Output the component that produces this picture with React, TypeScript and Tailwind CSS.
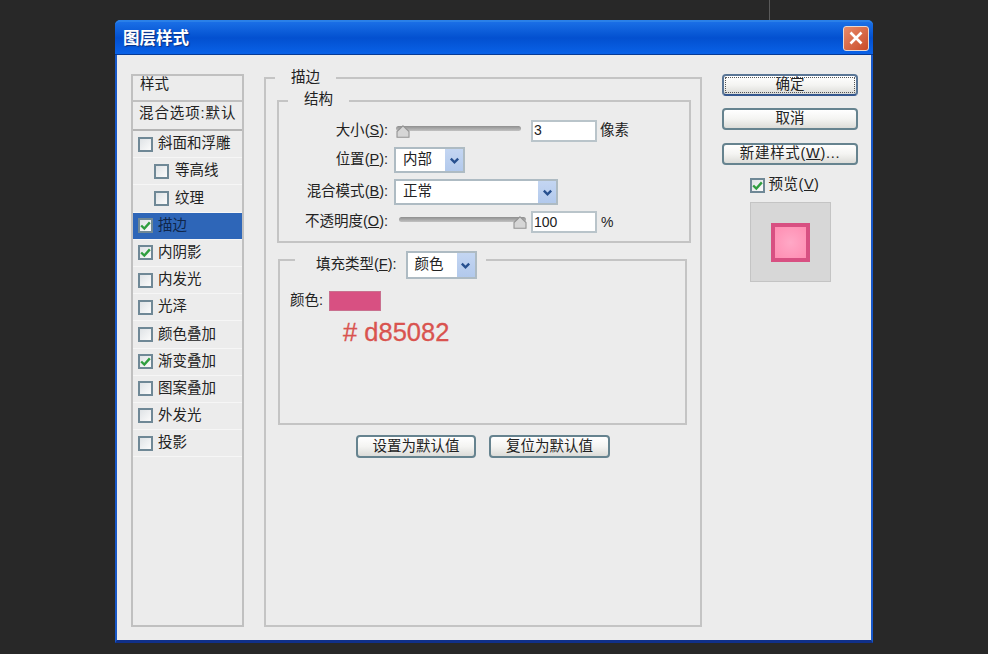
const Check = () => (
  <svg viewBox="0 0 14 14" className="w-[11px] h-[11px]">
    <path d="M1.5 7 L5.5 11 L12.5 3" fill="none" stroke="#2f9e3f" strokeWidth="3" />
  </svg>
);

const Checkbox = ({ checked }: { checked?: boolean }) => (
  <span className="flex items-center justify-center w-[15px] h-[15px] shrink-0 border-2 border-[#6f8896] bg-gradient-to-br from-[#dfe3e6] to-[#fbfbfb]">
    {checked && <Check />}
  </span>
);

const styleRows = [
  { name: '斜面和浮雕' },
  { name: '等高线', indent: true },
  { name: '纹理', indent: true },
  { name: '描边', checked: true, active: true },
  { name: '内阴影', checked: true },
  { name: '内发光' },
  { name: '光泽' },
  { name: '颜色叠加' },
  { name: '渐变叠加', checked: true },
  { name: '图案叠加' },
  { name: '外发光' },
  { name: '投影' },
];

const Select = ({ value, width }: { value: string; width: string }) => (
  <div className={`flex items-center justify-between h-full ${width} bg-white border-2 border-[#aebbc3] pl-[7px]`}>
    <span className="text-[14.5px] text-[#222]">{value}</span>
    <span className="flex items-center justify-center w-[18px] h-full bg-gradient-to-b from-[#c4d6f2] to-[#b2c9ec]">
      <svg viewBox="0 0 12 12" className="w-[11px] h-[11px]">
        <path d="M2 4 L6 8 L10 4" fill="none" stroke="#27508f" strokeWidth="2.6" />
      </svg>
    </span>
  </div>
);

const Slider = ({ thumbRight, className }: { thumbRight?: boolean; className: string }) => (
  <div className={`relative h-[14px] ${className}`}>
    <div className="absolute left-0 right-0 top-[2px] h-[5px] rounded-full bg-gradient-to-b from-[#8f8f8f] to-[#c2c2c2]" />
    <svg viewBox="0 0 14 13" className={`absolute top-[1px] w-[14px] h-[13px] ${thumbRight ? 'right-[-1px]' : 'left-0'}`}>
      <path d="M7 .8 L13 6.5 V12.2 H1 V6.5 Z" fill="#d6d6d6" stroke="#949494" strokeWidth="1.1" />
    </svg>
  </div>
);

const Button = ({ children, primary, className }: { children: React.ReactNode; primary?: boolean; className: string }) => (
  <button
    className={`flex items-center justify-center rounded-[4px] border-2 text-[14.5px] text-[#222] bg-gradient-to-b from-[#ffffff] via-[#f4f4f2] to-[#dcdcd8] ${
      primary
        ? 'border-[#5a7696] border-b-[#36588f] outline-1 outline-dotted outline-offset-[-4px] outline-[#555]'
        : 'border-[#66838f]'
    } ${className}`}
  >
    {children}
  </button>
);

const FormRow = ({ label, hotkey, className, children }: { label: string; hotkey: string; className: string; children: React.ReactNode }) => (
  <div className={`flex items-center ${className}`}>
    <span className="w-[110px] pr-[1px] text-right text-[14.5px] text-[#222] whitespace-nowrap">
      {label}(<u>{hotkey}</u>):
    </span>
    {children}
  </div>
);

const ValueInput = ({ value }: { value: string }) => (
  <div className="flex items-center w-[66px] h-[22px] bg-white border-2 border-[#b9c4ca] pl-[1px] text-[14px] text-[#222]">{value}</div>
);

export default function App() {
  return (
    <div className="relative w-full h-[654px] overflow-hidden bg-[#282828] pt-[20px] pl-[115px] font-['Liberation_Sans','Noto_Sans_CJK_SC',sans-serif]">
      <div className="absolute left-[769px] top-0 w-[1px] h-[20px] bg-[#5a5a5a]" />

      <div className="flex flex-col w-[758px] h-[623px] rounded-t-[6px] bg-[#ececec] border-x-[2px] border-b-[3px] border-x-[#1858c8] border-b-[#10308a]">
        {/* Title bar */}
        <div className="flex items-center justify-between h-[35px] shrink-0 rounded-t-[5px] pl-[6px] pr-[2px] -mx-[2px] bg-gradient-to-b from-[#1a6fe6] via-[#0350d0] to-[#0a62e8] border-t-2 border-t-[#2a80e8] border-b border-b-[#063a96]">
          <span className="ml-[2px] text-[16.5px] font-bold text-white [text-shadow:1px_1px_1px_#0a2f80]">图层样式</span>
          <span className="flex items-center justify-center w-[26px] h-[25px] mr-[2px] rounded-[3px] border border-[#e8d8d0] bg-gradient-to-br from-[#e88a68] to-[#c84a28]">
            <svg viewBox="0 0 16 16" className="w-[16px] h-[16px]">
              <path d="M2.5 2.5 L13.5 13.5 M13.5 2.5 L2.5 13.5" stroke="#fff" strokeWidth="2.6" />
            </svg>
          </span>
        </div>

        <div className="flex items-start pl-[14px]">
          {/* Style list */}
          <div className="w-[113px] h-[553px] mt-[19px] shrink-0 border-2 border-[#c0c0c0]">
            <div className="h-[26px] pl-[7px] border-b-2 border-[#c0c0c0] text-[14.5px] leading-[16px] text-[#222]">样式</div>
            <div className="h-[29px] pl-[6px] pt-[2px] border-b-2 border-[#b4b4b4] text-[14.5px] leading-[18px] text-[#222] whitespace-nowrap tracking-[0.9px]">混合选项:默认</div>
            {styleRows.map((row) => (
              <div
                key={row.name}
                className={`flex items-center h-[27.2px] border-b border-[#f6f6f6] text-[14.5px] ${
                  row.indent ? 'pl-[21px] gap-[6px]' : 'pl-[5px] gap-[5px]'
                } ${row.active ? 'bg-[#2e66b8] text-[#10264a]' : 'text-[#222]'}`}
              >
                <Checkbox checked={row.checked} />
                <span className="whitespace-nowrap">{row.name}</span>
              </div>
            ))}
          </div>

          {/* Stroke panel */}
          <fieldset className="w-[438px] h-[559px] mt-[13px] ml-[20px] shrink-0 border-2 border-[#c4c4c4]">
            <legend className="ml-[9px] px-[16px] h-[20px] leading-[18px] text-[14.5px] text-[#222]">描边</legend>

            <fieldset className="w-[414px] h-[152px] mt-[3px] ml-[11px] border-2 border-[#c4c4c4]">
              <legend className="ml-[9px] px-[16px] h-[20px] leading-[16px] text-[14.5px] text-[#222]">结构</legend>
              <div className="flex flex-col gap-[6px] pt-[9px]">
                <FormRow label="大小" hotkey="S" className="h-[21px]">
                  <Slider className="w-[125px] ml-[7px]" />
                  <div className="ml-[10px]"><ValueInput value="3" /></div>
                  <span className="ml-[3px] text-[14.5px] text-[#222]">像素</span>
                </FormRow>
                <FormRow label="位置" hotkey="P" className="h-[26px]">
                  <div className="h-full ml-[5px]"><Select value="内部" width="w-[71px]" /></div>
                </FormRow>
                <FormRow label="混合模式" hotkey="B" className="h-[26px]">
                  <div className="h-full ml-[5px]"><Select value="正常" width="w-[164px]" /></div>
                </FormRow>
                <FormRow label="不透明度" hotkey="O" className="h-[22px]">
                  <Slider thumbRight className="w-[127px] ml-[10px]" />
                  <div className="ml-[5px]"><ValueInput value="100" /></div>
                  <span className="ml-[4px] text-[14px] text-[#222]">%</span>
                </FormRow>
              </div>
            </fieldset>

            <fieldset className="w-[409px] h-[174px] mt-[8px] ml-[12px] border-2 border-[#c4c4c4]">
              <legend className="ml-[15px] pl-[21px] pr-[9px] h-[18px]">
                <div className="flex items-center h-[28px] gap-[9px]">
                  <span className="text-[14.5px] text-[#222] whitespace-nowrap">填充类型(<u>F</u>):</span>
                  <Select value="颜色" width="w-[71px]" />
                </div>
              </legend>
              <div className="flex items-center h-[20px] mt-[22px] ml-[10px]">
                <span className="w-[39px] text-[14.5px] text-[#222]">颜色:</span>
                <div className="w-[52px] h-[20px] bg-[#d85082] border border-[#c9708f]" />
              </div>
              <div className="mt-[6px] ml-[63px] text-[25.5px] leading-[30px] text-[#d9534f] [-webkit-text-stroke:0.3px_#d9534f] whitespace-nowrap"># d85082</div>
            </fieldset>

            <div className="flex gap-[13px] mt-[10px] ml-[90px]">
              <Button className="w-[120px] h-[23px]">设置为默认值</Button>
              <Button className="w-[121px] h-[23px]">复位为默认值</Button>
            </div>
          </fieldset>

          {/* Right actions */}
          <div className="flex flex-col items-center w-[136px] mt-[19px] ml-[20px] shrink-0">
            <Button primary className="w-full h-[22px]">确定</Button>
            <Button className="w-full h-[22px] mt-[12px]">取消</Button>
            <Button className="w-full h-[22px] mt-[13px] tracking-[0.7px]">新建样式(<u>W</u>)...</Button>
            <div className="flex items-center h-[20px] gap-[4px] mt-[10px] mr-[11px] text-[14.5px] text-[#222] tracking-[0.5px]">
              <Checkbox checked />
              <span>预览(<u>V</u>)</span>
            </div>
            <div className="flex items-center justify-center w-[81px] h-[80px] mt-[7px] bg-[#d7d7d7] border border-[#c4c4c4]">
              <div className="w-[39px] h-[39px] border-[4px] border-[#d85082] bg-[radial-gradient(circle,#ffa8c6,#ff8db2)]" />
            </div>
          </div>
        </div>
      </div>
    </div>
  );
}
